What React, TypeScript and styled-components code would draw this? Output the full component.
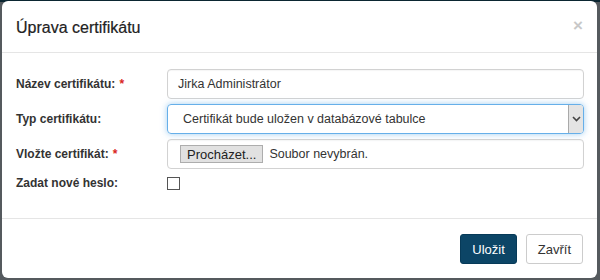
import * as React from "react";
import styled, { createGlobalStyle } from "styled-components";

const GlobalStyle = createGlobalStyle`
  html, body {
    margin: 0;
    padding: 0;
    background: #3d4347;
    font-family: "Liberation Sans", Arial, sans-serif;
  }
`;

const Backdrop = styled.div`
  width: 600px;
  height: 280px;
  box-sizing: border-box;
  padding: 1px 3px 2px 2px;
  background: linear-gradient(#0b2631 0px, #0b2631 2px, #555a5e 2px);
`;

const Modal = styled.div`
  height: 100%;
  background: #fff;
  border-radius: 6px;
  display: flex;
  flex-direction: column;
  box-sizing: border-box;
`;

const Header = styled.div`
  height: 51px;
  display: flex;
  align-items: center;
  justify-content: space-between;
  padding: 0 14px 0 14px;
  border-bottom: 1px solid #e5e5e5;
`;

const Title = styled.h4`
  margin: 0;
  font-size: 16px;
  font-weight: normal;
  color: #222;
  padding-top: 2px;
  -webkit-text-stroke: 0.2px #222;
`;

const Close = styled.button`
  border: none;
  background: none;
  padding: 0;
  font-size: 17px;
  font-weight: bold;
  color: #c8c8c8;
  cursor: pointer;
  line-height: 1;
  margin-top: -3px;
`;

const Body = styled.div`
  flex: 1;
  padding: 16px 13px 0 14px;
  display: flex;
  flex-direction: column;
  gap: 5px;
`;

const Row = styled.div<{ $short?: boolean }>`
  display: flex;
  align-items: center;
  height: ${(p) => (p.$short ? "16px" : "30px")};
  margin-top: ${(p) => (p.$short ? "1px" : "0")};
`;

const Label = styled.label`
  width: 151px;
  flex-shrink: 0;
  font-size: 12px;
  font-weight: bold;
  color: #333;
`;

const Required = styled.span`
  color: #d9261c;
  margin-left: 4px;
`;

const Field = styled.div<{ $focus?: boolean }>`
  flex: 1;
  height: 30px;
  box-sizing: border-box;
  border: 1px solid ${(p) => (p.$focus ? "#66afe9" : "#d2d2d2")};
  border-radius: 4px;
  box-shadow: ${(p) =>
    p.$focus ? "0 0 6px rgba(102, 175, 233, 0.6)" : "inset 0 1px 1px rgba(0,0,0,0.04)"};
  display: flex;
  align-items: center;
  font-size: 12.5px;
  color: #333;
  padding-left: 10px;
`;

const SelectText = styled.span`
  flex: 1;
  padding-left: 5px;
`;

const Arrow = styled.div`
  width: 15px;
  height: 28px;
  box-sizing: border-box;
  border-left: 1px solid #a9a9a9;
  background: #e4e4e4;
  border-radius: 0 3px 3px 0;
  display: flex;
  align-items: center;
  justify-content: center;
`;

const FileButton = styled.span`
  height: 18px;
  box-sizing: border-box;
  padding: 0 6px;
  border: 1px solid #adadad;
  background: #e1e1e1;
  font-size: 13px;
  display: flex;
  align-items: center;
  margin-left: 2px;
  margin-right: 6px;
  color: #222;
`;

const Checkbox = styled.span`
  width: 13px;
  height: 13px;
  box-sizing: border-box;
  border: 1px solid #555;
  background: #fff;
`;

const Footer = styled.div`
  border-top: 1px solid #e5e5e5;
  padding: 15px 14px 14px 14px;
  display: flex;
  justify-content: flex-end;
  gap: 9px;
`;

const Button = styled.button<{ $primary?: boolean }>`
  height: 30px;
  padding: 0 11px;
  border-radius: 3px;
  font-family: "Liberation Sans", Arial, sans-serif;
  font-size: 13px;
  border: 1px solid ${(p) => (p.$primary ? "#073a58" : "#cccccc")};
  background: ${(p) => (p.$primary ? "#0c4566" : "#fff")};
  color: ${(p) => (p.$primary ? "#fff" : "#333")};
`;

export default function App() {
  return (
    <>
      <GlobalStyle />
      <Backdrop>
        <Modal>
          <Header>
            <Title>Úprava certifikátu</Title>
            <Close>×</Close>
          </Header>
          <Body>
            <Row>
              <Label>
                Název certifikátu:<Required>*</Required>
              </Label>
              <Field>Jirka Administrátor</Field>
            </Row>
            <Row>
              <Label>Typ certifikátu:</Label>
              <Field $focus>
                <SelectText>Certifikát bude uložen v databázové tabulce</SelectText>
                <Arrow>
                  <svg width="9" height="6" viewBox="0 0 9 6">
                    <path d="M1 1 L4.5 4.5 L8 1" fill="none" stroke="#444" strokeWidth="1.6" />
                  </svg>
                </Arrow>
              </Field>
            </Row>
            <Row>
              <Label>
                Vložte certifikát:<Required>*</Required>
              </Label>
              <Field>
                <FileButton>Procházet...</FileButton>
                Soubor nevybrán.
              </Field>
            </Row>
            <Row $short>
              <Label>Zadat nové heslo:</Label>
              <Checkbox />
            </Row>
          </Body>
          <Footer>
            <Button $primary>Uložit</Button>
            <Button>Zavřít</Button>
          </Footer>
        </Modal>
      </Backdrop>
    </>
  );
}
